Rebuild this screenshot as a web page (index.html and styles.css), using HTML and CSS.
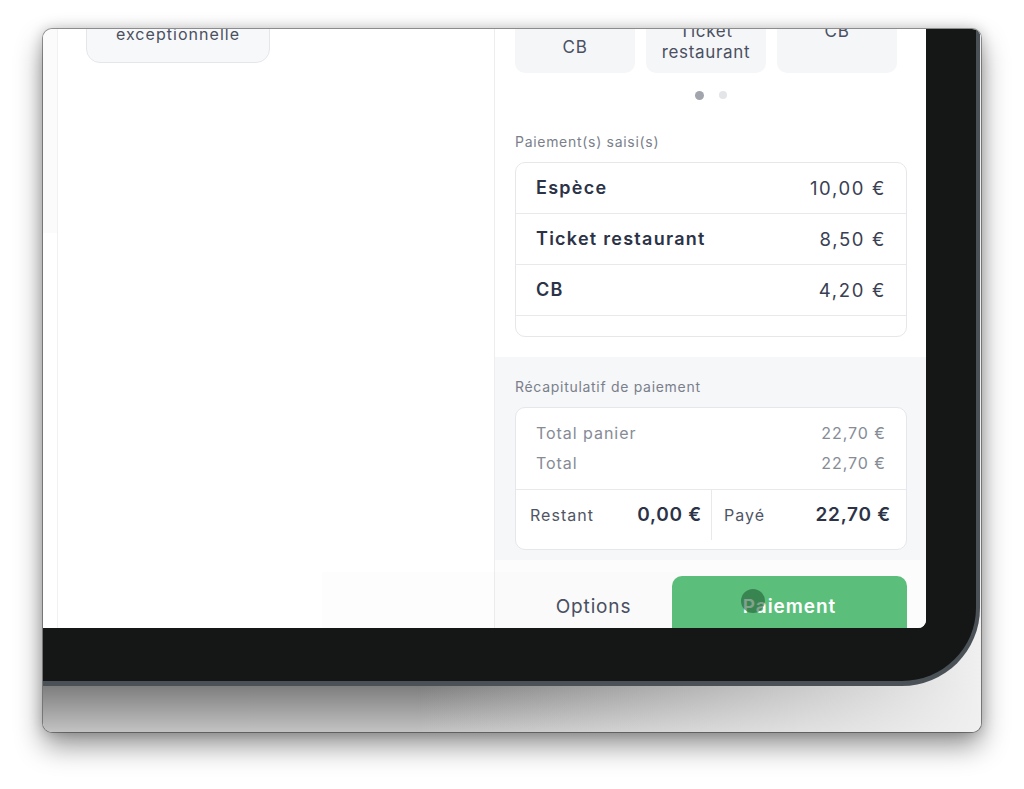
FILE: index.html
```html
<!DOCTYPE html>
<html lang="fr">
<head>
<meta charset="utf-8">
<title>Paiement</title>
<link rel="stylesheet" href="styles.css">
</head>
<body>
<div class="window">
  <div class="tablet">
    <div class="screen">
      <div class="sidebar"><div class="sidebar-top"></div></div>
      <div class="left-main">
        <div class="action-tile">
          <span>Remise</span>
          <span>exceptionnelle</span>
        </div>
      </div>
      <div class="right-pane">
        <div class="pay-top">
          <div class="tiles">
            <div class="tile tile-low"><span>CB</span></div>
            <div class="tile"><span>Ticket</span><span>restaurant</span></div>
            <div class="tile"><span>CB</span><span>&nbsp;</span></div>
          </div>
          <div class="dots"><span class="dot dot-on"></span><span class="dot"></span></div>
          <div class="section-label">Paiement(s) saisi(s)</div>
          <div class="card entries">
            <div class="entry"><span class="entry-name">Espèce</span><span class="entry-value">10,00 €</span></div>
            <div class="entry"><span class="entry-name">Ticket restaurant</span><span class="entry-value">8,50 €</span></div>
            <div class="entry"><span class="entry-name">CB</span><span class="entry-value">4,20 €</span></div>
            <div class="entry-spacer"></div>
          </div>
        </div>
        <div class="summary">
          <div class="section-label">Récapitulatif de paiement</div>
          <div class="card recap">
            <div class="recap-top">
              <div class="recap-row"><span>Total panier</span><span>22,70 €</span></div>
              <div class="recap-row"><span>Total</span><span>22,70 €</span></div>
            </div>
            <div class="recap-bottom">
              <div class="half half-left"><span class="half-label">Restant</span><span class="half-value">0,00 €</span></div>
              <div class="half half-right"><span class="half-label">Payé</span><span class="half-value">22,70 €</span></div>
            </div>
          </div>
        </div>
        <div class="footer">
          <div class="options">Options</div>
          <div class="pay-btn">Paiement<span class="touch"></span></div>
        </div>
      </div>
      <div class="video-overlay"></div>
    </div>
  </div>
</div>
</body>
</html>
```
FILE: styles.css
```css
* { box-sizing: border-box; }
html, body { margin: 0; padding: 0; }
body {
  background: #ffffff;
  font-family: Inter, "Noto Sans", "Liberation Sans", sans-serif;
  width: 1024px;
  height: 789px;
  overflow: hidden;
}
.window {
  margin: 29px 0 0 43px;
  width: 938px;
  height: 703px;
  border-radius: 9px;
  overflow: hidden;
  background:
    linear-gradient(to right, rgba(238,238,238,0) 40%, rgba(238,238,238,0.75) 85%, rgba(240,240,240,1) 100%),
    linear-gradient(to bottom, #7e7e7e 657px, #c3c3c3 703px);
  box-shadow: 0 0 0 1px rgba(0,0,0,0.35), 0 14px 28px rgba(0,0,0,0.42), 0 0 14px rgba(0,0,0,0.22);
}
.tablet {
  margin: -40px 0 0 -40px;
  width: 977px;
  padding: 0 50px 53px 0;
  background: #151716;
  border-right: 4px solid #4a5258;
  border-bottom: 5px solid #4a5258;
  border-bottom-right-radius: 78px;
}
.screen {
  width: 923px;
  height: 639px;
  background: #ffffff;
  border-bottom-right-radius: 8px;
  overflow: hidden;
  display: flex;
  position: relative;
}
.sidebar {
  width: 55px;
  flex: none;
  border-right: 1px solid #f1f1f2;
}
.sidebar-top { height: 244px; background: #fbfbfb; }
.left-main {
  width: 437px;
  flex: none;
  border-right: 1px solid #ededee;
  padding-left: 28px;
}
.action-tile {
  width: 184px;
  height: 74px;
  background: #f7f8fa;
  border: 1px solid #e4e6ea;
  border-radius: 14px;
  display: flex;
  flex-direction: column;
  align-items: center;
  padding-top: 13px;
  font-size: 16px;
  line-height: 21px;
  letter-spacing: 0.065em;
  color: #4a5060;
}
.right-pane {
  width: 431px;
  flex: none;
  display: flex;
  flex-direction: column;
}
.pay-top { padding: 0 19px 0 20px; }
.tiles { display: flex; gap: 11px; }
.tile {
  width: 120px;
  height: 84px;
  background: #f5f6f8;
  border-radius: 10px;
  display: flex;
  flex-direction: column;
  align-items: center;
  padding-top: 32px;
  font-size: 17px;
  line-height: 21px;
  letter-spacing: 0.04em;
  color: #4a5062;
}
.tile-low { padding-top: 48px; }
.dots { display: flex; justify-content: center; gap: 15px; margin-top: 18px; }
.dot { width: 8px; height: 8px; border-radius: 50%; background: #e3e5e8; }
.dot-on { background: #a2a5ab; width: 9px; height: 9px; margin-top: -0.5px; }
.section-label {
  font-size: 14px;
  line-height: 20px;
  letter-spacing: 0.05em;
  color: #7a7f8b;
}
.pay-top .section-label { margin-top: 32px; }
.card {
  margin-top: 10px;
  background: #ffffff;
  border: 1px solid #e6e7ea;
  border-radius: 10px;
}
.entry {
  height: 51px;
  border-bottom: 1px solid #e8e9ec;
  display: flex;
  align-items: center;
  justify-content: space-between;
  padding: 0 20px;
  font-size: 18px;
  letter-spacing: 0.07em;
  color: #2c3347;
}
.entry-name { font-weight: 600; }
.entry-value { font-weight: 400; color: #3a4054; font-size: 18.5px; letter-spacing: 0.09em; }
.entry-spacer { height: 20px; }
.summary {
  margin-top: 20px;
  background: #f6f7f9;
  padding: 20px 19px 10px 20px;
}
.recap-top {
  padding: 10px 20px 11px;
  border-bottom: 1px solid #e8e9ec;
}
.recap-row {
  height: 30px;
  display: flex;
  align-items: center;
  justify-content: space-between;
  font-size: 16px;
  letter-spacing: 0.06em;
  color: #868b96;
}
.recap-bottom {
  display: flex;
  height: 59px;
  padding-bottom: 9px;
}
.half {
  display: flex;
  align-items: center;
  justify-content: space-between;
}
.half-left {
  width: 196px;
  border-right: 1px solid #e8e9ec;
  padding: 0 9px 0 14px;
}
.half-right {
  flex: 1;
  padding: 0 15px 0 12px;
}
.half-label { font-size: 16px; color: #4f5565; letter-spacing: 0.065em; }
.half-value { font-size: 19px; font-weight: 600; color: #2c3347; letter-spacing: 0.04em; }
.footer {
  flex: 1;
  background: #fcfcfd;
  padding: 16px 19px 0 20px;
  display: flex;
}
.options {
  width: 157px;
  height: 62px;
  display: flex;
  align-items: center;
  justify-content: center;
  font-size: 19px;
  letter-spacing: 0.045em;
  color: #4a5062;
}
.pay-btn {
  position: relative;
  width: 235px;
  height: 62px;
  border-radius: 10px;
  background: #5bbf7b;
  display: flex;
  align-items: center;
  justify-content: center;
  font-size: 19px;
  font-weight: 600;
  letter-spacing: 0.05em;
  color: #ffffff;
}
.touch {
  position: absolute;
  left: 69px;
  top: 13px;
  width: 24px;
  height: 24px;
  border-radius: 50%;
  background: rgba(30, 85, 50, 0.55);
}
.video-overlay {
  position: absolute;
  left: 319px;
  top: 583px;
  width: 358px;
  height: 56px;
  background: rgba(0, 0, 0, 0.008);
  pointer-events: none;
}
```
